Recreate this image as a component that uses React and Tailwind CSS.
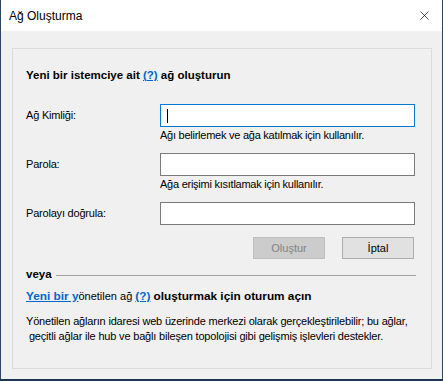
import { X } from 'lucide-react';

const font = { fontFamily: '"Liberation Sans", Arial, sans-serif' };

const Field = ({ label, hint, focused }) => (
  <div className="grid grid-cols-[134px_255px] items-start">
    <label className="h-[23px] flex items-center text-[11px] tracking-[-0.2px] text-[#000]">{label}</label>
    <div>
      <div
        className={`h-[23px] bg-white border flex items-center px-[6px] ${
          focused ? 'border-[#0078d7]' : 'border-[#7a7a7a]'
        }`}
      >
        {focused && <span className="w-px h-[14px] bg-black" />}
      </div>
      {hint && <p className="text-[11px] leading-[14px] mt-[1px] tracking-[-0.25px] text-black">{hint}</p>}
    </div>
  </div>
);

export default function App() {
  return (
    <div className="w-[443px] h-[381px] flex flex-col bg-[#1d3552]" style={font}>
      <div className="h-[379px] flex flex-col border-x border-[#2b4563] bg-[#f0f0f0]">
        {/* Title bar */}
        <div className="h-[31px] bg-white flex items-center justify-between pl-[8px] pr-[10px]">
          <span className="text-[12px] text-black">Ağ Oluşturma</span>
          <X size={15} strokeWidth={1.1} className="text-black" />
        </div>

        {/* Body */}
        <div className="flex-1 pt-[17px] pl-[11px] pr-[10px] pb-[10px]">
          <div className="h-[321px] border border-[#dcdcdc] pl-[13px] pr-[15px] pt-[19px]">
            <h2 className="text-[11.5px] font-bold leading-[14px] text-black">
              Yeni bir istemciye ait{' '}
              <span className="text-[#0066cc] underline">(?)</span> ağ oluşturun
            </h2>

            <div className="mt-[22px] flex flex-col gap-[1px]">
              <Field label="Ağ Kimliği:" hint="Ağı belirlemek ve ağa katılmak için kullanılır." focused />
              <div className="h-[9px]" />
              <Field label="Parola:" hint="Ağa erişimi kısıtlamak için kullanılır." />
              <div className="h-[9px]" />
              <Field label="Parolayı doğrula:" />
            </div>

            <div className="mt-[12px] flex justify-end gap-[17px] pr-[2px]">
              <button
                disabled
                className="w-[72px] h-[22px] text-[11px] bg-[#cccccc] border border-[#bfbfbf] text-[#838383]"
              >
                Oluştur
              </button>
              <button className="w-[72px] h-[22px] text-[11px] bg-[#e1e1e1] border border-[#adadad] text-black">
                İptal
              </button>
            </div>

            <div className="mt-[8px] flex items-center gap-[4px]">
              <span className="text-[11.5px] font-bold leading-[14px] text-black">veya</span>
              <div className="flex-1 h-px bg-[#a0a0a0] mt-[2px]" />
            </div>

            <p className="mt-[8px] text-[11px] leading-[14px] text-black">
              <span className="text-[#0066cc] text-[11.8px] font-bold underline">Yeni bir y</span>
              <span>önetilen ağ </span>
              <span className="text-[#0066cc] text-[11.8px] font-bold underline">(?)</span>{' '}
              <span className="text-[11.8px] font-bold">oluşturmak için oturum açın</span>
            </p>

            <p className="mt-[11px] text-[11px] leading-[15px] tracking-[-0.18px] text-black whitespace-pre">
              {'Yönetilen ağların idaresi web üzerinde merkezi olarak gerçekleştirilebilir; bu ağlar,\n geçitli ağlar ile hub ve bağlı bileşen topolojisi gibi gelişmiş işlevleri destekler.'}
            </p>
          </div>
        </div>
      </div>
    </div>
  );
}
